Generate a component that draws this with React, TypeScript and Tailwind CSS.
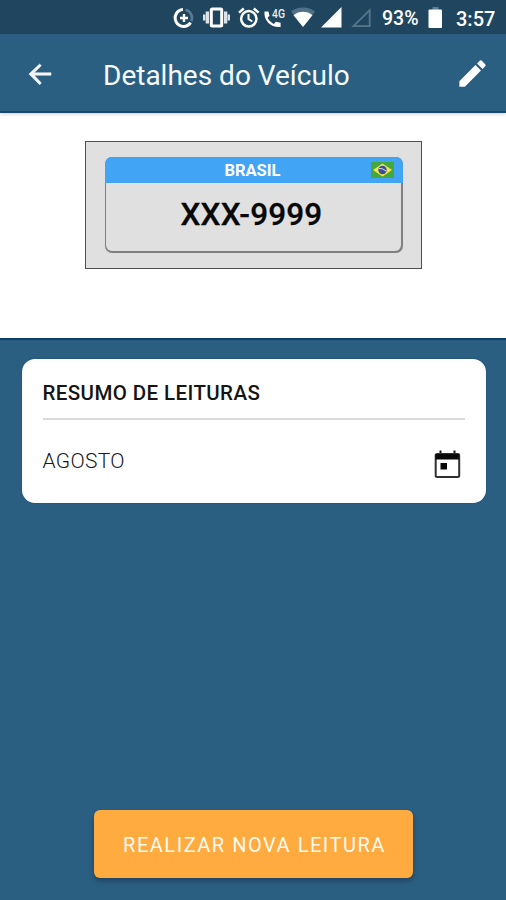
import React from "react";

function StatusBar() {
  return (
    <div className="flex h-[34px] items-start bg-[#20465f] pl-[173px] pt-[6px] text-white">
      <svg className="h-6 w-[22px] shrink-0" viewBox="0 0 22 24" fill="none">
        <path d="M10 3.6A8.4 8.4 0 1 0 17.6 16.6" stroke="#fff" strokeWidth="3" />
        <path d="M12.5 3.8A8.4 8.4 0 0 1 18.3 15.2" stroke="#587991" strokeWidth="2.6" />
        <path d="M11 8v8M7 12h8" stroke="#fff" strokeWidth="2.4" />
      </svg>
      <svg className="ml-2 h-6 w-[27px] shrink-0" viewBox="0 0 27 24">
        <path d="M0 8.500h2.300v6H0zM2.700 5.500h3.300v12H2.700zM24.700 8.500H27v6h-2.300zM21 5.500h3.300v12H21z" fill="#dce4e9" />
        <rect x="8.300" y="2.900" width="10.400" height="17.200" rx="1" fill="none" stroke="#fff" strokeWidth="3" />
      </svg>
      <svg className="ml-[7px] h-6 w-6 shrink-0" viewBox="0 0 24 24" fill="none" stroke="#fff">
        <circle cx="11.8" cy="12.8" r="7.700" strokeWidth="2.500" />
        <path d="M2 6.700 6.800 2.500M16.800 2.500l4.800 4.200" strokeWidth="2.400" />
        <path d="M11.500 8v5l3.800 2.500" strokeWidth="2" />
      </svg>
      <svg className="ml-[2px] h-6 w-6 shrink-0" viewBox="0 0 24 24">
        <path
          d="M1.500 5.500h4l1 4.200-2 2.100c1.500 2.700 3.500 4.700 6.300 6.100l2.100-2.100 4.700 1v4.200C8.500 22 .5 15 1.500 5.500z"
          fill="#fff"
        />
        <text x="9" y="11.500" fill="#e8eef2" fontFamily="Roboto, sans-serif" fontSize="13" fontWeight="500" textLength="13" lengthAdjust="spacingAndGlyphs">
          4G
        </text>
      </svg>
      <svg className="ml-1 h-6 w-6 shrink-0" viewBox="0 0 24 24">
        <path d="M0 5.500C6.500 0 17.500 0 24 5.500l-3.300 4.200C15.500 6.500 8.500 6.500 3.300 9.700z" fill="#4f7086" />
        <path d="M2.500 9.200c5.500-4.500 13.500-4.500 19 0L12 21z" fill="#fff" />
      </svg>
      <svg className="ml-[6px] h-6 w-[21px] shrink-0" viewBox="0 0 21 24">
        <path d="M20.500 1v20.500H0z" fill="#fff" />
      </svg>
      <svg className="ml-[9px] h-6 w-[21px] shrink-0" viewBox="0 0 21 24">
        <path d="M18.700 4.200v16H2.500z" fill="none" stroke="#55778e" strokeWidth="1.800" />
      </svg>
      <span className="ml-[10px] w-[46px] whitespace-nowrap pt-px text-[19.500px] font-medium leading-6">93%</span>
      <svg className="h-6 w-[15px] shrink-0" viewBox="0 0 15 24">
        <rect x="4.500" y="1" width="6" height="4" fill="#607e91" />
        <rect x=".5" y="3.500" width="13.500" height="18.500" rx="1" fill="#fff" />
      </svg>
      <span className="ml-[13px] whitespace-nowrap pt-px text-[20px] font-medium leading-6">3:57</span>
    </div>
  );
}

function Header() {
  return (
    <header className="relative flex h-[79px] items-center border-b-2 border-[#174873] bg-[#2b5f82] text-white shadow-[0_1px_4px_rgba(0,0,0,0.2)]">
      <svg className="ml-[25px] mt-[2px] h-[30px] w-[30px]" viewBox="0 0 24 24" fill="#f5f8fb" stroke="#f5f8fb" strokeWidth=".4">
        <path d="M20.800 11H7.400l5.700-5.700L11.700 3.900 3.100 12l8.600 8.600 1.400-1.400L7.400 13h13.400z" />
      </svg>
      <h1 className="ml-[48px] mt-[6px] whitespace-nowrap text-[28px] leading-8 text-[#f7fafc]">Detalhes do Veículo</h1>
      <svg className="ml-auto mr-[16px] mt-px h-[35px] w-[35px]" viewBox="0 0 24 24" fill="#fff">
        <path d="M3 17.250V21h3.750L17.810 9.940l-3.750-3.750L3 17.250zM20.710 7.040a1 1 0 0 0 0-1.410l-2.340-2.340a1 1 0 0 0-1.410 0l-1.830 1.830 3.750 3.750 1.830-1.830z" />
      </svg>
    </header>
  );
}

function Plate() {
  return (
    <section className="flex h-[225px] justify-center bg-white pt-7">
      <div className="ml-px h-[128px] w-[337px] border-[1.500px] border-[#505050] bg-[#e0e0e0] px-[18.500px] pt-[15px]">
        <div className="flex h-[95.500px] flex-col overflow-hidden rounded-[7px] bg-[#808080]">
          <div className="relative flex h-[26px] shrink-0 items-center justify-center bg-[#42a4f5] pr-[2px] pt-[2px] text-[16.500px] font-bold text-white">
            <span>BRASIL</span>
            <svg className="absolute right-[9px] top-[5px] h-4 w-[23px]" viewBox="0 0 23 16">
              <rect width="23" height="16" fill="#45a83f" />
              <path d="M11.500 1.500 21 8l-9.500 6.500L2 8z" fill="#f4e34a" />
              <circle cx="11.500" cy="8" r="4.200" fill="#3d4d9d" />
              <path d="M8 6.500q4-.5 7 2.500" fill="none" stroke="#d8dff0" />
            </svg>
          </div>
          <div className="mx-[1.500px] mb-[1.500px] flex grow items-center justify-center rounded-b-[6px] bg-[#e0e0e0] pb-[5px] pr-[4px] text-[31.500px] font-medium tracking-[0.150px] text-[#080808] [-webkit-text-stroke:0.3px_#080808]">
            XXX-9999
          </div>
        </div>
      </div>
    </section>
  );
}

function Summary() {
  return (
    <section className="ml-[21.500px] h-[144px] w-[464px] rounded-[13px] bg-white px-[21px] shadow-[0_0_2px_#174873]">
      <h2 className="flex h-[61px] items-center border-b-2 border-[#dadada] pt-[9px] text-[20.500px] font-medium tracking-[0.400px] text-[#151515]">
        RESUMO DE LEITURAS
      </h2>
      <div className="flex h-[83px] items-center justify-between">
        <span className="text-[21px] font-light tracking-[0.300px] text-[#181818]">AGOSTO</span>
        <svg className="mr-px mt-[6px] h-[34px] w-[34px]" viewBox="0 0 34 34">
          <path d="M9.500 2.500h2v4h-2zM23.500 2.500h2v4h-2z" fill="#171717" />
          <rect x="5.700" y="6" width="23.500" height="23" rx="1.500" fill="none" stroke="#303030" strokeWidth="2" />
          <path d="M5.500 6H29v5.500H5.500zM10.500 15h6.500v6.500h-6.500z" fill="#080808" />
        </svg>
      </div>
    </section>
  );
}

export default function App() {
  return (
    <div className="flex h-[900px] w-[506px] flex-col overflow-hidden bg-[#2b5f82] font-['Roboto',sans-serif]">
      <StatusBar />
      <Header />
      <Plate />
      <main className="flex grow flex-col border-t-2 border-[#0d3d6b] pb-[22px] pt-[19px]">
        <Summary />
        <button className="ml-[94px] mt-auto h-[68px] w-[319px] rounded-[6px] bg-[#ffab40] pl-[2px] pt-px text-[20px] tracking-[1.530px] text-[#fffaf0] shadow-[0_3px_5px_rgba(20,40,60,0.5)]">
          REALIZAR NOVA LEITURA
        </button>
      </main>
    </div>
  );
}
